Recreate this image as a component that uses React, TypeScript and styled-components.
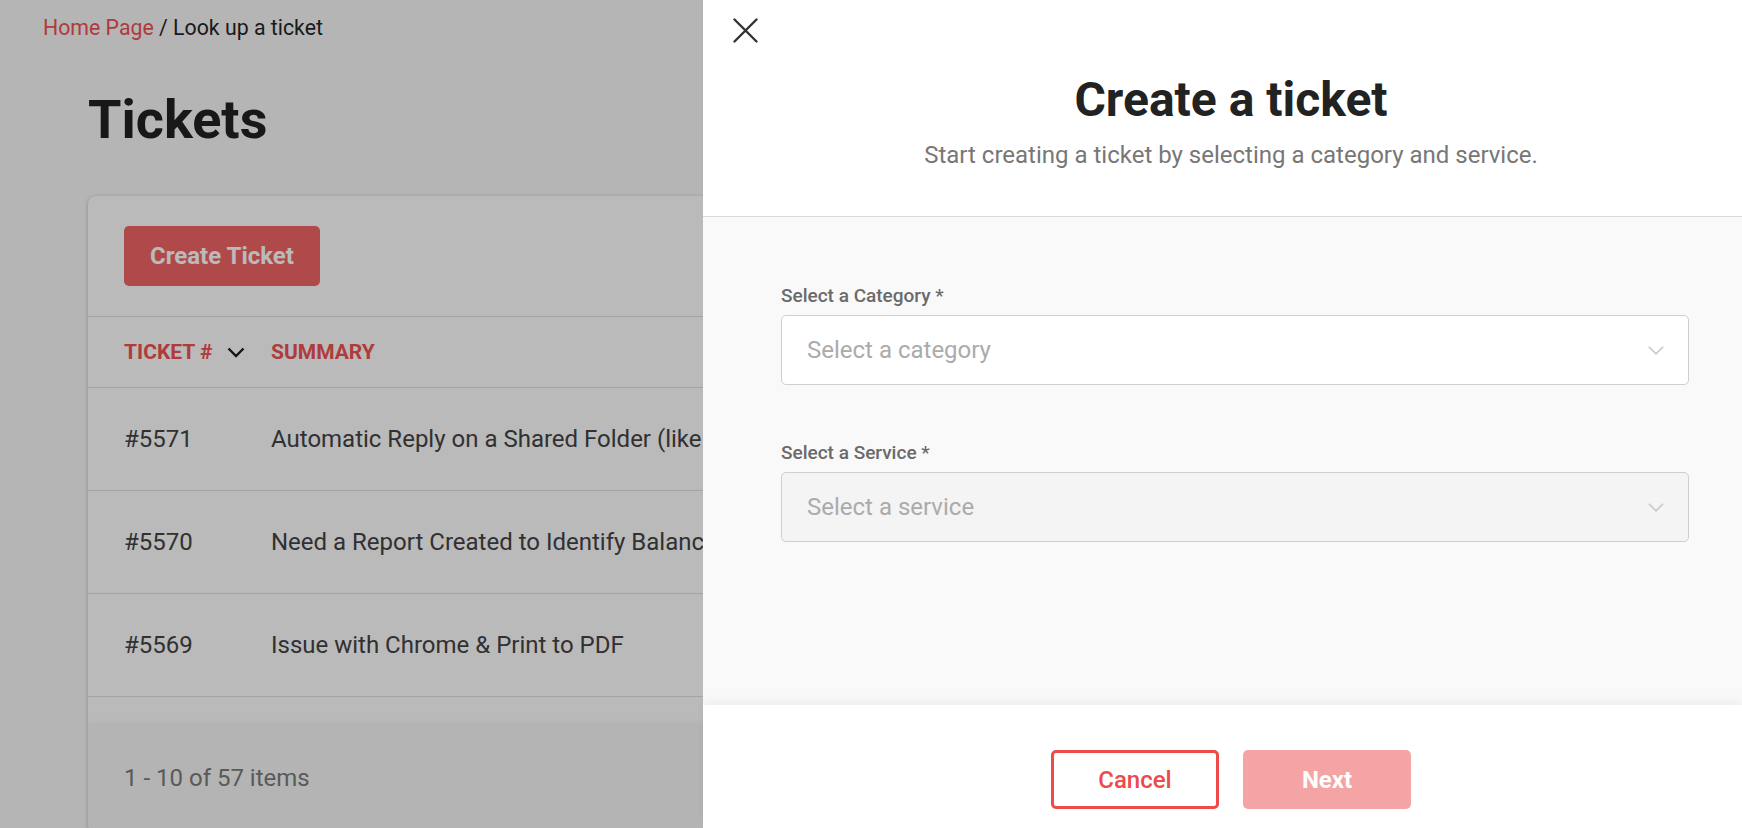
import styled, { createGlobalStyle } from "styled-components";

const GlobalStyle = createGlobalStyle`
  * {
    box-sizing: border-box;
  }

  html,
  body {
    margin: 0;
    padding: 0;
    height: 100%;
    overflow: hidden;
  }

  body {
    font-family: Roboto, "Liberation Sans", Arial, sans-serif;
    background: #f9f9f9;
    color: #262626;
  }
`;

const Page = styled.div`
  min-height: 100vh;
`;

const Breadcrumb = styled.nav`
  padding: 16px 43px 0;
  font-size: 21.3px;
  line-height: 24px;
  color: #262626;
`;

const CrumbLink = styled.a`
  color: #f05252;
  text-decoration: none;
`;

const Content = styled.main`
  padding: 0 88px;
`;

const PageTitle = styled.h1`
  margin: 52px 0 48px;
  font-size: 54px;
  line-height: 56px;
  font-weight: 700;
  color: #222;
`;

const Card = styled.section`
  background: #fff;
  border-radius: 8px;
  box-shadow: 0 1px 4px rgba(0, 0, 0, 0.25);
  overflow: hidden;
`;

const Toolbar = styled.div`
  padding: 30px 36px;
  border-bottom: 1px solid #e0e0e0;
`;

const PrimaryButton = styled.button`
  width: 196px;
  height: 60px;
  border: none;
  border-radius: 5px;
  background: #f16565;
  color: #fff;
  font-family: inherit;
  font-size: 24px;
  font-weight: 700;
  cursor: pointer;
`;

const TableRow = styled.div<{ $header?: boolean }>`
  display: grid;
  grid-template-columns: 147px 1fr;
  align-items: center;
  height: ${(p) => (p.$header ? "71px" : "103px")};
  padding: 0 36px;
  border-bottom: 1px solid #e0e0e0;
  font-size: ${(p) => (p.$header ? "21px" : "24px")};
  font-weight: ${(p) => (p.$header ? 700 : 400)};
  color: ${(p) => (p.$header ? "#f05252" : "#444")};
  white-space: nowrap;
`;

const HeaderCell = styled.div`
  display: flex;
  align-items: center;
  gap: 15px;
`;

const TableBody = styled.div`
  height: 336px;
  overflow: hidden;
`;

const TableFooter = styled.div`
  display: flex;
  align-items: center;
  height: 108px;
  padding: 0 36px;
  background: #f7f7f7;
  box-shadow: 0 -2px 4px rgba(0, 0, 0, 0.04);
  font-size: 24px;
  color: #7c7c7c;
`;

const Backdrop = styled.div`
  position: fixed;
  inset: 0;
  background: rgba(0, 0, 0, 0.27);
`;

const Drawer = styled.aside`
  position: fixed;
  top: 0;
  right: 0;
  bottom: 0;
  width: 1039px;
  display: flex;
  flex-direction: column;
  background: #fff;
`;

const DrawerHeader = styled.header`
  padding: 18px 0 47px 17px;
  border-bottom: 1px solid #d9d9d9;
  text-align: center;
`;

const CloseRow = styled.div`
  display: flex;
  padding-left: 13px;
`;

const CloseButton = styled.button`
  display: flex;
  width: 25px;
  height: 25px;
  padding: 0;
  border: none;
  background: none;
  cursor: pointer;
  color: #333;
`;

const DrawerTitle = styled.h2`
  margin: 29px 0 13px;
  font-size: 48px;
  line-height: 56px;
  font-weight: 700;
  color: #222;
`;

const DrawerSubtitle = styled.p`
  margin: 0;
  font-size: 24px;
  line-height: 28px;
  color: #777;
`;

const DrawerBody = styled.div`
  flex: 1;
  display: flex;
  flex-direction: column;
  padding: 67px 53px 0 78px;
  background: #f9f9f9;
`;

const Field = styled.div`
  display: flex;
  flex-direction: column;
  gap: 7px;

  & + & {
    margin-top: 56px;
  }
`;

const Label = styled.label`
  font-size: 19px;
  line-height: 24px;
  font-weight: 500;
  color: #6a6a6a;
`;

const SelectBox = styled.div<{ $disabled?: boolean }>`
  display: flex;
  align-items: center;
  justify-content: space-between;
  height: 70px;
  padding: 0 24px 0 25px;
  border: 1px solid #cfcfcf;
  border-radius: 5px;
  background: ${(p) => (p.$disabled ? "#f4f4f4" : "#fff")};
  font-size: 24px;
  color: #ababab;
`;

const DrawerFooter = styled.footer`
  display: flex;
  justify-content: center;
  gap: 24px;
  height: 123px;
  padding: 45px 0 0 17px;
  background: #fff;
  box-shadow: 0 -4px 10px rgba(0, 0, 0, 0.05);
`;

const FooterButton = styled.button<{ $variant: "outline" | "solid" }>`
  width: 168px;
  height: 59px;
  border-radius: 5px;
  font-family: inherit;
  font-size: 24px;
  cursor: pointer;
  border: ${(p) => (p.$variant === "outline" ? "3px solid #ee4a4a" : "none")};
  background: ${(p) => (p.$variant === "outline" ? "#fff" : "#f4a4a4")};
  color: ${(p) => (p.$variant === "outline" ? "#ee4a4a" : "#fff")};
  font-weight: ${(p) => (p.$variant === "outline" ? 500 : 700)};
`;

const SortChevron = () => (
  <svg width="18" height="11" viewBox="0 0 18 11" fill="none">
    <path d="M1.5 1.5 9 9l7.5-7.5" stroke="#1c1c1c" strokeWidth="2.4" />
  </svg>
);

const SelectChevron = () => (
  <svg width="16" height="9" viewBox="0 0 16 9" fill="none">
    <path d="M.8.8 8 7.8 15.2.8" stroke="#c8c8c8" strokeWidth="1.6" />
  </svg>
);

const CloseIcon = () => (
  <svg width="25" height="25" viewBox="0 0 25 25" fill="none">
    <path d="M1.5 1.5l22 22M23.5 1.5l-22 22" stroke="currentColor" strokeWidth="2.4" strokeLinecap="round" />
  </svg>
);

const tickets = [
  { id: "#5571", summary: "Automatic Reply on a Shared Folder (like a helpdesk inbox)" },
  { id: "#5570", summary: "Need a Report Created to Identify Balance Due Accounts" },
  { id: "#5569", summary: "Issue with Chrome & Print to PDF" },
];

export default function App() {
  return (
    <Page>
      <GlobalStyle />
      <Breadcrumb>
        <CrumbLink href="#">Home Page</CrumbLink> / Look up a ticket
      </Breadcrumb>

      <Content>
        <PageTitle>Tickets</PageTitle>
        <Card>
          <Toolbar>
            <PrimaryButton>Create Ticket</PrimaryButton>
          </Toolbar>
          <TableRow $header>
            <HeaderCell>
              TICKET #
              <SortChevron />
            </HeaderCell>
            <HeaderCell>SUMMARY</HeaderCell>
          </TableRow>
          <TableBody>
            {tickets.map((t) => (
              <TableRow key={t.id}>
                <div>{t.id}</div>
                <div>{t.summary}</div>
              </TableRow>
            ))}
          </TableBody>
          <TableFooter>1 - 10 of 57 items</TableFooter>
        </Card>
      </Content>

      <Backdrop />

      <Drawer>
        <DrawerHeader>
          <CloseRow>
            <CloseButton aria-label="Close">
              <CloseIcon />
            </CloseButton>
          </CloseRow>
          <DrawerTitle>Create a ticket</DrawerTitle>
          <DrawerSubtitle>Start creating a ticket by selecting a category and service.</DrawerSubtitle>
        </DrawerHeader>

        <DrawerBody>
          <Field>
            <Label>Select a Category *</Label>
            <SelectBox>
              Select a category
              <SelectChevron />
            </SelectBox>
          </Field>
          <Field>
            <Label>Select a Service *</Label>
            <SelectBox $disabled>
              Select a service
              <SelectChevron />
            </SelectBox>
          </Field>
        </DrawerBody>

        <DrawerFooter>
          <FooterButton $variant="outline">Cancel</FooterButton>
          <FooterButton $variant="solid">Next</FooterButton>
        </DrawerFooter>
      </Drawer>
    </Page>
  );
}
